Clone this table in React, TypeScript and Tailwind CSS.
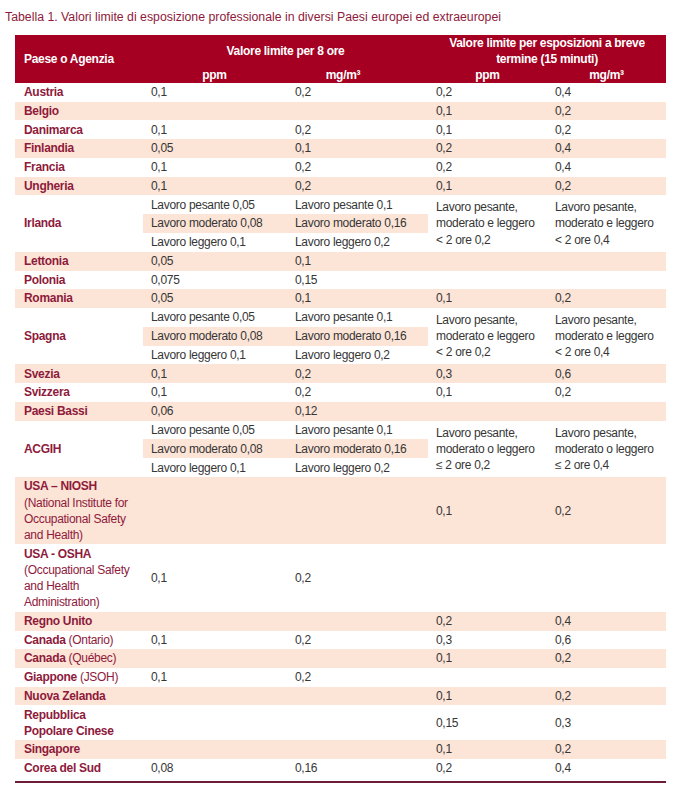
import type { ReactNode } from "react";

/**
 * Tabella 1 — occupational exposure limits by country / agency.
 * Rows alternate white / peach; "Lavoro" rows split the 8-hour columns into
 * three sub-rows with the middle one shaded.
 */

type Single = {
  kind: "single";
  name: ReactNode;
  cells: [string, string, string, string];
  shade: boolean;
};

type Group = {
  kind: "group";
  name: ReactNode;
  sub: [string, string][];
  short: [string, string];
  shade: boolean;
};

type Row = Single | Group;

const ROW = "grid grid-cols-[128px_143px_142px_119px_119px] items-center";

const B = ({ children }: { children: ReactNode }) => <span className="font-bold">{children}</span>;

const lavoro: [string, string][] = [
  ["Lavoro pesante 0,05", "Lavoro pesante 0,1"],
  ["Lavoro moderato 0,08", "Lavoro moderato 0,16"],
  ["Lavoro leggero 0,1", "Lavoro leggero 0,2"],
];

const rows: Row[] = [
  { kind: "single", name: <B>Austria</B>, cells: ["0,1", "0,2", "0,2", "0,4"], shade: false },
  { kind: "single", name: <B>Belgio</B>, cells: ["", "", "0,1", "0,2"], shade: true },
  { kind: "single", name: <B>Danimarca</B>, cells: ["0,1", "0,2", "0,1", "0,2"], shade: false },
  { kind: "single", name: <B>Finlandia</B>, cells: ["0,05", "0,1", "0,2", "0,4"], shade: true },
  { kind: "single", name: <B>Francia</B>, cells: ["0,1", "0,2", "0,2", "0,4"], shade: false },
  { kind: "single", name: <B>Ungheria</B>, cells: ["0,1", "0,2", "0,1", "0,2"], shade: true },
  {
    kind: "group",
    name: <B>Irlanda</B>,
    sub: lavoro,
    short: ["Lavoro pesante, moderato e leggero < 2 ore 0,2", "Lavoro pesante, moderato e leggero < 2 ore 0,4"],
    shade: false,
  },
  { kind: "single", name: <B>Lettonia</B>, cells: ["0,05", "0,1", "", ""], shade: true },
  { kind: "single", name: <B>Polonia</B>, cells: ["0,075", "0,15", "", ""], shade: false },
  { kind: "single", name: <B>Romania</B>, cells: ["0,05", "0,1", "0,1", "0,2"], shade: true },
  {
    kind: "group",
    name: <B>Spagna</B>,
    sub: lavoro,
    short: ["Lavoro pesante, moderato e leggero < 2 ore 0,2", "Lavoro pesante, moderato e leggero < 2 ore 0,4"],
    shade: false,
  },
  { kind: "single", name: <B>Svezia</B>, cells: ["0,1", "0,2", "0,3", "0,6"], shade: true },
  { kind: "single", name: <B>Svizzera</B>, cells: ["0,1", "0,2", "0,1", "0,2"], shade: false },
  { kind: "single", name: <B>Paesi Bassi</B>, cells: ["0,06", "0,12", "", ""], shade: true },
  {
    kind: "group",
    name: <B>ACGIH</B>,
    sub: lavoro,
    short: ["Lavoro pesante, moderato o leggero ≤ 2 ore 0,2", "Lavoro pesante, moderato o leggero ≤ 2 ore 0,4"],
    shade: false,
  },
  {
    kind: "single",
    name: (
      <>
        <span className="block font-bold">USA – NIOSH</span>
        (National Institute for Occupational Safety and Health)
      </>
    ),
    cells: ["", "", "0,1", "0,2"],
    shade: true,
  },
  {
    kind: "single",
    name: (
      <>
        <span className="block font-bold">USA - OSHA</span>
        (Occupational Safety and Health Administration)
      </>
    ),
    cells: ["0,1", "0,2", "", ""],
    shade: false,
  },
  { kind: "single", name: <B>Regno Unito</B>, cells: ["", "", "0,2", "0,4"], shade: true },
  { kind: "single", name: <><B>Canada</B> (Ontario)</>, cells: ["0,1", "0,2", "0,3", "0,6"], shade: false },
  { kind: "single", name: <><B>Canada</B> (Québec)</>, cells: ["", "", "0,1", "0,2"], shade: true },
  { kind: "single", name: <><B>Giappone</B> (JSOH)</>, cells: ["0,1", "0,2", "", ""], shade: false },
  { kind: "single", name: <B>Nuova Zelanda</B>, cells: ["", "", "0,1", "0,2"], shade: true },
  { kind: "single", name: <B>Repubblica Popolare Cinese</B>, cells: ["", "", "0,15", "0,3"], shade: false },
  { kind: "single", name: <B>Singapore</B>, cells: ["", "", "0,1", "0,2"], shade: true },
  { kind: "single", name: <B>Corea del Sud</B>, cells: ["0,08", "0,16", "0,2", "0,4"], shade: false },
];

function NameCell({ children }: { children: ReactNode }) {
  return <div className="py-[1.25px] pr-[11px] pl-[9px] text-[#8e1a3c]">{children}</div>;
}

function Cell({ children, className = "" }: { children: ReactNode; className?: string }) {
  return <div className={`py-[1.25px] pr-[10px] pl-[8px] ${className}`}>{children}</div>;
}

function TableRow({ row }: { row: Row }) {
  const bg = row.shade ? "bg-[#fce4d6]" : "bg-white";

  if (row.kind === "single") {
    return (
      <div className={`${ROW} ${bg}`}>
        <NameCell>{row.name}</NameCell>
        <Cell>{row.cells[0]}</Cell>
        <Cell className="pl-[9px]">{row.cells[1]}</Cell>
        <Cell>{row.cells[2]}</Cell>
        <Cell>{row.cells[3]}</Cell>
      </div>
    );
  }

  return (
    <div className={`${ROW} ${bg}`}>
      <NameCell>{row.name}</NameCell>
      <div className="col-span-2 flex flex-col">
        {row.sub.map(([a, b], i) => (
          <div
            key={i}
            className={`grid grid-cols-[143px_142px] py-[0.08px] ${i === 1 ? "bg-[#fce4d6]" : ""}`}
          >
            <Cell>{a}</Cell>
            <Cell className="pl-[9px]">{b}</Cell>
          </div>
        ))}
      </div>
      <Cell>{row.short[0]}</Cell>
      <Cell>{row.short[1]}</Cell>
    </div>
  );
}

export default function App() {
  return (
    <div
      className="min-h-screen bg-white text-[12px] leading-[16.2px] tracking-[-0.3px] text-[#363636]"
      style={{ fontFamily: '"Liberation Sans", Arial, sans-serif' }}
    >
      <h1 className="pt-[9px] pl-[5px] text-[12.3px] leading-[16px] font-normal tracking-normal text-[#8e1a3c]">
        Tabella 1. Valori limite di esposizione professionale in diversi Paesi europei ed extraeuropei
      </h1>

      <div className="mt-[10px] ml-[15px] w-[651px]">
        {/* Header */}
        <div className="grid h-[48px] grid-cols-[128px_285px_238px] bg-[#a50022] font-bold text-white">
          <div className="flex items-center pl-[9px]">Paese o Agenzia</div>
          <div className="flex flex-col">
            <div className="flex h-[32px] items-center justify-center">Valore limite per 8 ore</div>
            <div className="grid h-[16px] grid-cols-[143px_142px] leading-[16px]">
              <div className="text-center">ppm</div>
              <div className="pr-[28px] text-center">mg/m³</div>
            </div>
          </div>
          <div className="flex flex-col">
            <div className="h-[32px] text-center leading-[16px]">
              Valore limite per esposizioni a breve
              <br />
              termine (15 minuti)
            </div>
            <div className="grid h-[16px] grid-cols-[119px_119px] leading-[16px]">
              <div className="text-center">ppm</div>
              <div className="text-center">mg/m³</div>
            </div>
          </div>
        </div>

        {rows.map((row, i) => (
          <TableRow key={i} row={row} />
        ))}

        <div className="mt-[3px] h-[2px] bg-[#6e1d38]" />
      </div>
    </div>
  );
}
